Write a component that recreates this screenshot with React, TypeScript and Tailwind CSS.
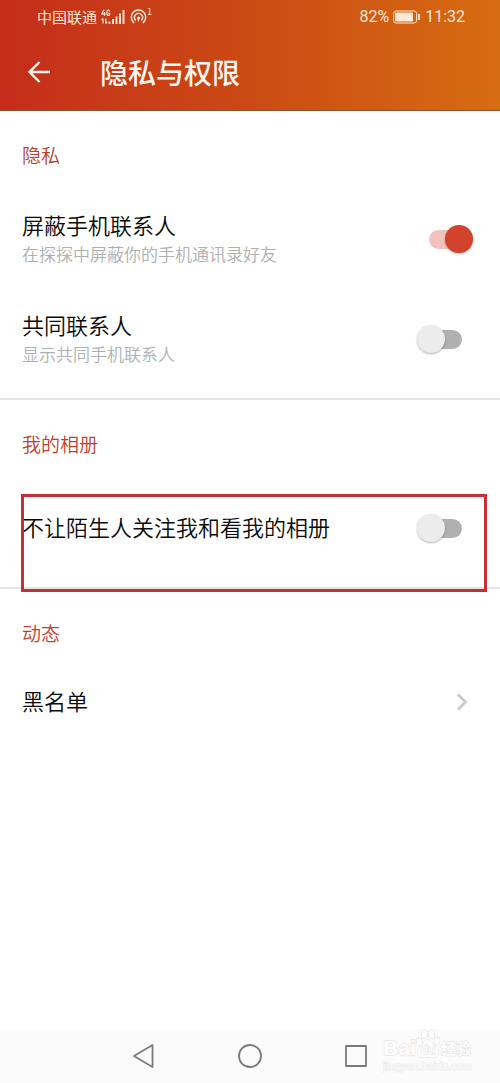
import type { ReactNode } from "react";

function StatusBar() {
  return (
    <div className="flex h-[34px] items-center justify-between pr-[35px] pl-[37px] text-[#ffe9d6]">
      <div className="flex items-center">
        <span className="text-[15px]">中国联通</span>
        <svg className="ml-1 h-4 w-[25px]" viewBox="0 0 25 16" fill="none" stroke="currentColor" aria-hidden="true">
          <path d="M3.2 0.8 L0.8 4.8 H4.6 M3.5 3 V6.8 M8.6 2.4 Q8.3 1 7.3 1 Q5.8 1 5.8 3.8 Q5.8 6.5 7.3 6.5 Q8.7 6.5 8.7 4.3 H7.4" strokeWidth="1.2" />
          <path d="M2 14.5 V9.5 M0.6 11 L2 9.5 M4.8 9.5 V14.5 M6.2 13 L4.8 14.5" strokeWidth="1.2" />
          <path d="M8.5 15 V12.5 M12 15 V10 M15.5 15 V7.5 M19 15 V4.5 M22.5 15 V1" strokeWidth="1.9" />
        </svg>
        <svg className="ml-1 h-4 w-[17px]" viewBox="0 0 17 16" fill="none" stroke="currentColor" strokeWidth="1.5" strokeLinecap="round" aria-hidden="true">
          <path d="M3.8 13.6 A7.2 7.2 0 1 1 13.2 13.6" />
          <path d="M5.4 11 A4 4 0 1 1 11.6 11" />
          <circle cx="8.5" cy="9" r="1.5" fill="currentColor" stroke="none" />
          <path d="M8.5 9 V12" strokeWidth="1.2" />
        </svg>
        <span className="self-start text-[9px] leading-3">1</span>
      </div>
      <div className="flex items-center font-[Roboto] text-base">
        <span>82%</span>
        <svg className="mr-1 ml-1 h-[14px] w-7" viewBox="0 0 28 14" fill="none" aria-hidden="true">
          <rect x="0.6" y="1" width="23" height="12" rx="2.5" stroke="currentColor" strokeWidth="1" />
          <rect x="2" y="2.5" width="18" height="9" rx="0.8" fill="currentColor" />
          <path d="M26 4 V10" stroke="currentColor" strokeWidth="1.8" />
        </svg>
        <span>11:32</span>
      </div>
    </div>
  );
}

function Section({ title, divided, children }: { title: string; divided?: boolean; children: ReactNode }) {
  return (
    <section className={divided ? "relative border-b-2 border-[#e4e4e4] pb-[9px]" : "relative"}>
      <h2 className="flex h-[78px] items-start px-[22px] pt-[30px] text-[19px] leading-7 font-[350] text-[#c0402c]">{title}</h2>
      {children}
    </section>
  );
}

function SwitchRow({ id, label, hint, on }: { id: string; label: string; hint?: string; on?: boolean }) {
  return (
    <div className="flex h-[100px] items-center justify-between pr-[27px] pl-[22px]">
      <div className="flex flex-col gap-px pb-1">
        <label htmlFor={id} className="text-[22px] leading-8 font-[350] text-[#0a0a0a]">{label}</label>
        {hint && <p className="text-[17px] leading-[26px] font-[350] text-[#b0b0b0]">{hint}</p>}
      </div>
      <span className="relative flex h-7 w-14 shrink-0 items-center justify-center">
        <input id={id} type="checkbox" role="switch" defaultChecked={on} className="peer absolute inset-0 z-10 m-0 cursor-pointer opacity-0" />
        <span className="h-[19px] w-[33px] rounded-full bg-[#b0b0b0] peer-checked:bg-[#f1c3bc]" />
        <span className="absolute top-0 left-0 size-7 rounded-full bg-[#ececec] shadow-[0_1px_2px_rgba(0,0,0,0.3)] peer-checked:left-7 peer-checked:bg-[#d2432e]" />
      </span>
    </div>
  );
}

function Watermark() {
  return (
    <div className="absolute right-7 bottom-[11px] flex flex-col text-white [-webkit-text-stroke:1px_#e0e0e0] [paint-order:stroke_fill]" aria-hidden="true">
      <div className="flex h-8 items-end">
        <span className="font-['Liberation_Sans'] text-[21px] leading-6 font-bold">Bai</span>
        <span className="relative flex h-8 w-6 justify-center">
          <svg className="absolute inset-0 h-8 w-6" viewBox="0 0 24 32" fill="#fcfcfc" stroke="#dcdcdc">
            <ellipse cx="3.5" cy="14" rx="2.8" ry="4" transform="rotate(-15 3.5 14)" />
            <ellipse cx="8.5" cy="6" rx="3" ry="4.3" />
            <ellipse cx="15.5" cy="6" rx="3" ry="4.3" />
            <ellipse cx="21" cy="13" rx="2.6" ry="4" transform="rotate(15 21 13)" />
            <path d="M12 12 C8 12 7.5 17 4 19.5 C-0.5 23 1.5 29.5 6.5 29.5 C9 29.5 10 29 12 29 C14 29 15 29.5 17.5 29.5 C22.5 29.5 24.5 23 20 19.5 C16.5 17 16 12 12 12 Z" />
          </svg>
          <span className="relative self-end font-['Liberation_Sans'] text-[13px] leading-5">du</span>
        </span>
        <span className="ml-px text-[15px] leading-6 font-bold">经验</span>
      </div>
      <span className="font-['Liberation_Sans'] text-[11px] leading-3 text-[#fcfcfc] [-webkit-text-stroke:1px_#e8e8e8]">jingyan.baidu.com</span>
    </div>
  );
}

export default function App() {
  return (
    <div className="flex min-h-screen flex-col bg-white font-['Noto_Sans_CJK_SC',sans-serif]">
      <header className="h-[111px] border-b border-[#8d5033] bg-linear-to-r from-[#c52c1a] via-[#cb4a14] to-[#d66c11]">
        <StatusBar />
        <div className="flex h-[76px] items-center pl-[27px] text-[#fff6ef]">
          <button type="button" aria-label="返回" className="flex size-6 items-center justify-center">
            <svg className="h-[22px] w-6" viewBox="0 0 24 22" fill="none" stroke="currentColor" strokeWidth="2.4" aria-hidden="true">
              <path d="M12.5 1 L2.5 11 L12.5 21 M2.5 11 H23" />
            </svg>
          </button>
          <h1 className="ml-[49px] text-[28px] leading-10 font-medium">隐私与权限</h1>
        </div>
      </header>

      <main className="flex-1">
        <Section title="隐私" divided>
          <SwitchRow id="block-contacts" label="屏蔽手机联系人" hint="在探探中屏蔽你的手机通讯录好友" on />
          <SwitchRow id="mutual-contacts" label="共同联系人" hint="显示共同手机联系人" />
        </Section>
        <Section title="我的相册" divided>
          <SwitchRow id="album-privacy" label="不让陌生人关注我和看我的相册" />
          <div className="pointer-events-none absolute top-[94px] right-[13px] -bottom-[5px] left-[21px] border-3 border-[#c42f39]" />
        </Section>
        <Section title="动态">
          <a href="#blacklist" className="flex h-[70px] items-center justify-between pr-8 pl-[22px] text-[22px] leading-8 font-[350] text-[#0a0a0a]">
            <span className="pb-1">黑名单</span>
            <svg className="h-[18px] w-3" viewBox="0 0 12 18" fill="none" stroke="#c8c8c8" strokeWidth="2.6" aria-hidden="true">
              <path d="M2 1.5 L9.5 9 L2 16.5" />
            </svg>
          </a>
        </Section>
      </main>

      <nav className="relative flex h-[54px] items-center justify-center gap-20 bg-[#fbfbfb] text-[#7a7a7a]">
        <button type="button" aria-label="后退" className="size-[26px]">
          <svg viewBox="0 0 26 26" fill="none" stroke="currentColor" strokeWidth="1.8" strokeLinejoin="round" aria-hidden="true">
            <path d="M21.5 2 V24 L3 13 Z" />
          </svg>
        </button>
        <button type="button" aria-label="主屏幕" className="size-[26px]">
          <svg viewBox="0 0 26 26" fill="none" stroke="currentColor" strokeWidth="1.8" aria-hidden="true">
            <circle cx="13" cy="13" r="11" />
          </svg>
        </button>
        <button type="button" aria-label="最近任务" className="size-[26px]">
          <svg viewBox="0 0 26 26" fill="none" stroke="currentColor" strokeWidth="1.8" strokeLinejoin="round" aria-hidden="true">
            <rect x="3" y="3" width="20" height="20" />
          </svg>
        </button>
        <Watermark />
      </nav>
    </div>
  );
}
